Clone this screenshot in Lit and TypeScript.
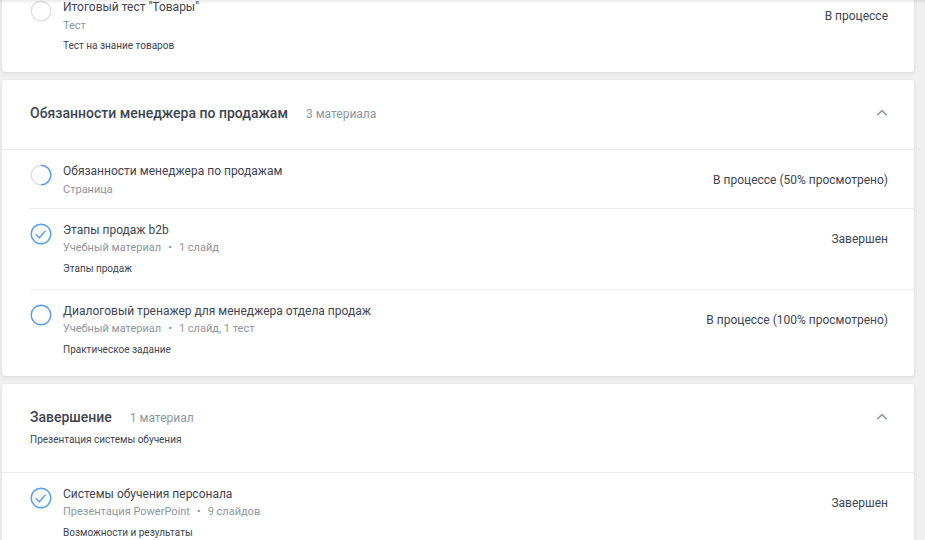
import { LitElement, html, svg, css, nothing } from "lit";
import { customElement, property } from "lit/decorators.js";

interface Material {
  title: string;
  meta: string[];
  note?: string;
  status: string;
  progress: number;
  done?: boolean;
}

interface Section {
  title: string;
  count: string;
  note?: string;
  items: Material[];
}

const continued: Material = {
  title: 'Итоговый тест "Товары"',
  meta: ["Тест"],
  note: "Тест на знание товаров",
  status: "В процессе",
  progress: 0,
};

const sections: Section[] = [
  {
    title: "Обязанности менеджера по продажам",
    count: "3 материала",
    items: [
      {
        title: "Обязанности менеджера по продажам",
        meta: ["Страница"],
        status: "В процессе (50% просмотрено)",
        progress: 50,
      },
      {
        title: "Этапы продаж b2b",
        meta: ["Учебный материал", "1 слайд"],
        note: "Этапы продаж",
        status: "Завершен",
        progress: 100,
        done: true,
      },
      {
        title: "Диалоговый тренажер для менеджера отдела продаж",
        meta: ["Учебный материал", "1 слайд, 1 тест"],
        note: "Практическое задание",
        status: "В процессе (100% просмотрено)",
        progress: 100,
      },
    ],
  },
  {
    title: "Завершение",
    count: "1 материал",
    note: "Презентация системы обучения",
    items: [
      {
        title: "Системы обучения персонала",
        meta: ["Презентация PowerPoint", "9 слайдов"],
        note: "Возможности и результаты",
        status: "Завершен",
        progress: 100,
        done: true,
      },
    ],
  },
];

@customElement("progress-ring")
export class ProgressRing extends LitElement {
  @property({ type: Number }) value = 0;
  @property({ type: Boolean }) done = false;

  static styles = css`
    :host {
      display: block;
      width: 22px;
      height: 22px;
    }
    svg {
      display: block;
    }
    .track,
    .bar,
    .tick {
      fill: none;
    }
    .track {
      stroke: #dfe0e1;
      stroke-width: 1.4;
    }
    .bar {
      stroke: #559bfb;
      stroke-width: 1.4;
    }
    .tick {
      stroke: #559bfb;
      stroke-width: 1.4;
    }
  `;

  render() {
    return html`
      <svg width="22" height="22" viewBox="0 0 22 22" aria-hidden="true">
        ${this.value < 100 ? svg`<circle class="track" cx="11" cy="11" r="9.8"></circle>` : nothing}
        ${this.value > 0
          ? svg`<circle class="bar" cx="11" cy="11" r="9.8" pathLength="100"
              stroke-dasharray="${this.value} ${100 - this.value}" transform="rotate(-90 11 11)"></circle>`
          : nothing}
        ${this.done ? svg`<path class="tick" d="M5.8 11.2 9.4 14.7 15.6 7.6"></path>` : nothing}
      </svg>
    `;
  }
}

@customElement("material-row")
export class MaterialRow extends LitElement {
  @property({ attribute: false }) item!: Material;

  static styles = css`
    :host {
      display: flex;
      align-items: flex-start;
      padding: 13px 26px 10px 0;
      color: #40454f;
    }
    .text {
      flex: 1;
      min-width: 0;
      margin-left: 11px;
    }
    .ring {
      margin-top: 1px;
    }
    .title {
      display: block;
      font-size: 12px;
      line-height: 16px;
      color: inherit;
      text-decoration: none;
    }
    .meta {
      display: flex;
      align-items: center;
      gap: 7px;
      height: 18px;
      margin-top: 1px;
      font-size: 11px;
      line-height: 16px;
      color: #8d969e;
    }
    .single {
      align-items: flex-end;
    }
    .note {
      margin: 6px 0 4px;
      font-size: 10px;
      line-height: 12px;
    }
    .status {
      margin-top: 9px;
      font-size: 12px;
      line-height: 16px;
    }
  `;

  render() {
    const { title, meta, note, status, progress, done } = this.item;
    return html`
      <progress-ring class="ring" .value=${progress} .done=${!!done}></progress-ring>
      <div class="text">
        <a class="title" href="#">${title}</a>
        <div class="meta ${meta.length === 1 ? "single" : ""}">
          ${meta.map((m, i) => html`${i ? html`<span>•</span>` : nothing}<span>${m}</span>`)}
        </div>
        ${note ? html`<p class="note">${note}</p>` : nothing}
      </div>
      <span class="status">${status}</span>
    `;
  }
}

@customElement("app-root")
export class AppRoot extends LitElement {
  static styles = css`
    :host {
      display: block;
      position: relative;
      box-sizing: border-box;
      height: 100vh;
      overflow: hidden;
      padding: 0 11px 0 2px;
      background: #f0f0f0;
      color: #40454f;
      font-family: Roboto, "Liberation Sans", sans-serif;
    }
    .top-shadow {
      position: absolute;
      inset: 0 0 auto;
      height: 4px;
      background: linear-gradient(rgba(0, 0, 0, 0.08), rgba(0, 0, 0, 0));
    }
    .card {
      margin-bottom: 8px;
      padding-bottom: 6px;
      border-radius: 3px;
      background: #fff;
      box-shadow: 0 1px 4px rgba(0, 0, 0, 0.1);
    }
    .continued {
      border-radius: 0 0 3px 3px;
    }
    .continued .list {
      margin-top: -14px;
    }
    .head {
      display: flex;
      align-items: flex-start;
      justify-content: space-between;
      padding: 23px 26px 26px 28px;
      border-bottom: 1px solid #ebebeb;
    }
    .line {
      display: flex;
      align-items: baseline;
      gap: 18px;
      height: 20px;
    }
    h2 {
      margin: 0;
      font-size: 14px;
      font-weight: 500;
      line-height: 20px;
    }
    .count {
      font-size: 12px;
      line-height: 20px;
      color: #8d969e;
    }
    .about {
      margin: 7px 0 0;
      font-size: 10px;
      line-height: 12px;
    }
    .toggle {
      display: flex;
      padding: 4px 0;
      border: 0;
      background: none;
    }
    .chevron {
      fill: none;
      stroke: #8d969e;
      stroke-width: 1.5;
    }
    .list {
      margin: 0;
      padding: 0 0 0 28px;
      list-style: none;
    }
    .list li + li {
      border-top: 1px solid #ebebeb;
    }
  `;

  private renderList(items: Material[]) {
    return html`<ul class="list">
      ${items.map((item) => html`<li><material-row .item=${item}></material-row></li>`)}
    </ul>`;
  }

  render() {
    return html`
      <section class="card continued">${this.renderList([continued])}</section>
      ${sections.map(
        (s) => html`
          <section class="card">
            <header class="head">
              <div>
                <div class="line">
                  <h2>${s.title}</h2>
                  <span class="count">${s.count}</span>
                </div>
                ${s.note ? html`<p class="about">${s.note}</p>` : nothing}
              </div>
              <button class="toggle" type="button" aria-expanded="true" aria-label="Свернуть">
                <svg width="12" height="12" viewBox="0 0 12 12" aria-hidden="true">
                  <path class="chevron" d="M1.2 8.2 6 3.6 10.8 8.2"></path>
                </svg>
              </button>
            </header>
            ${this.renderList(s.items)}
          </section>
        `,
      )}
      <div class="top-shadow"></div>
    `;
  }
}
